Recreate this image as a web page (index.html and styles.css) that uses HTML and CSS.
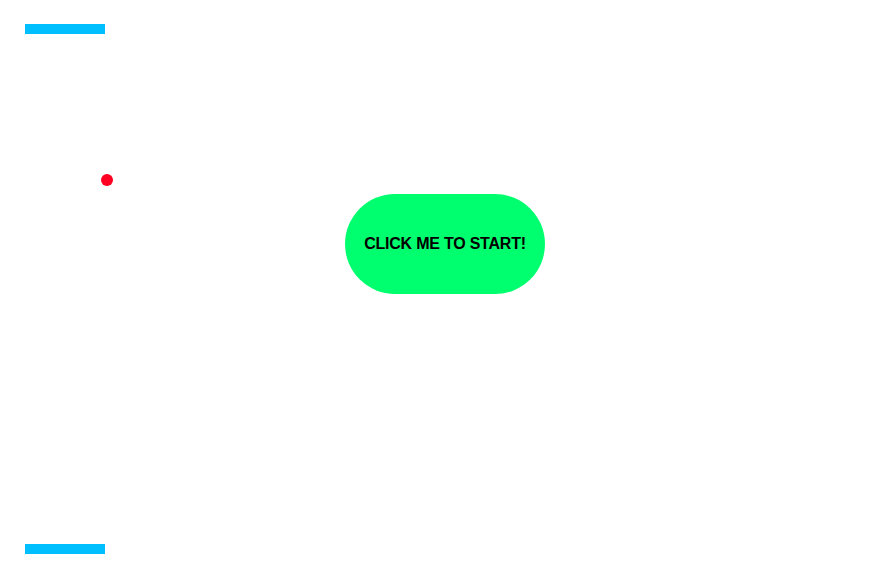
FILE: index.html
```html
<!DOCTYPE html>
<html>
<head>
<meta charset="utf-8">
<link rel="stylesheet" href="styles.css">
</head>
<body>
<div class="court">
  <div class="paddle paddle-top"></div>
  <div class="ball"></div>
  <div class="paddle paddle-bottom"></div>
  <button class="start">CLICK ME TO START!</button>
</div>
</body>
</html>
```
FILE: styles.css
```css
html, body {
  margin: 0;
  padding: 0;
  background: #ffffff;
}
.court {
  position: relative;
  width: 885px;
  height: 582px;
  overflow: hidden;
}
.paddle {
  position: absolute;
  left: 25px;
  width: 80px;
  height: 10px;
  background: #00bfff;
}
.paddle-top { top: 24px; }
.paddle-bottom { top: 544px; }
.ball {
  position: absolute;
  left: 101px;
  top: 174px;
  width: 12px;
  height: 12px;
  border-radius: 50%;
  background: #ff0022;
}
.start {
  position: absolute;
  left: 345px;
  top: 194px;
  width: 200px;
  height: 100px;
  border: none;
  border-radius: 50px;
  background: #00ff6e;
  color: #000;
  font-family: "Liberation Sans", Arial, sans-serif;
  font-weight: bold;
  font-size: 16px;
  letter-spacing: -0.22px;
  padding: 0;
  cursor: pointer;
}
```
